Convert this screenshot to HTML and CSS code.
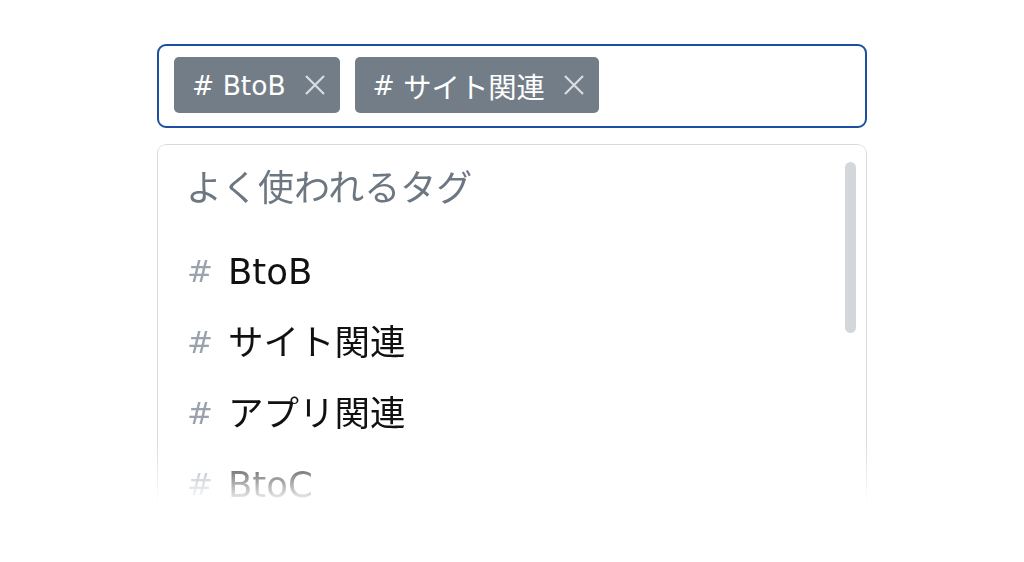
FILE: index.html
```html
<!DOCTYPE html>
<html lang="ja">
<head>
<meta charset="utf-8">
<link rel="stylesheet" href="styles.css">
</head>
<body>
<div class="wrap">
  <div class="input">
    <span class="tag"># BtoB<span class="x"><svg viewBox="0 0 20 20" width="20" height="20"><path d="M1 1 L19 19 M19 1 L1 19" stroke="#d9dde1" stroke-width="2.2" fill="none"/></svg></span></span>
    <span class="tag"># <span class="ja">サイト関連</span><span class="x"><svg viewBox="0 0 20 20" width="20" height="20"><path d="M1 1 L19 19 M19 1 L1 19" stroke="#d9dde1" stroke-width="2.2" fill="none"/></svg></span></span>
  </div>
  <div class="dropdown">
    <div class="title">よく使われるタグ</div>
    <ul class="list">
      <li><span class="hash">#</span>BtoB</li>
      <li><span class="hash">#</span>サイト関連</li>
      <li><span class="hash">#</span>アプリ関連</li>
      <li><span class="hash">#</span>BtoC</li>
    </ul>
    <div class="scrollbar"></div>
  </div>
</div>
</body>
</html>
```
FILE: styles.css
```css
html, body { margin: 0; padding: 0; background: #fff; }
body {
  font-family: "DejaVu Sans", "Noto Sans CJK JP", sans-serif;
  width: 1024px; height: 562px; overflow: hidden;
}
.wrap {
  width: 710px;
  margin: 44px 0 0 157px;
  display: flex; flex-direction: column; gap: 16px;
}
.input {
  box-sizing: border-box;
  height: 84px;
  border: 2px solid #1c4fa1;
  border-radius: 9px;
  padding: 11px 15px;
  display: flex; gap: 15px; align-items: flex-start;
}
.tag {
  height: 56px;
  box-sizing: border-box;
  background: #737d88;
  color: #fff;
  border-radius: 5px;
  padding: 0 15px 0 18px;
  display: flex; align-items: center;
  font-size: 26.5px;
  white-space: pre;
}
.tag .ja { font-size: 1.07em; }
.tag .x { display: flex; margin-left: 19px; }
.dropdown {
  position: relative;
  box-sizing: border-box;
  height: 375px;
  border: 1.5px solid #d6dade;
  border-bottom: none;
  border-radius: 9px 9px 0 0;
  padding: 21px 0 0 28px;
  overflow: hidden;
  -webkit-mask-image: linear-gradient(to bottom, #000 300px, transparent 360px);
  mask-image: linear-gradient(to bottom, #000 300px, transparent 360px);
}
.title {
  font-size: 36px;
  line-height: 46px;
  color: #6d7782;
}
.list {
  list-style: none; margin: 24px 0 0; padding: 0;
}
.list li {
  height: 71px; line-height: 71px;
  font-size: 35.5px; color: #111;
  display: flex; align-items: center;
}
.hash {
  color: #9aa3ad;
  width: 41px;
  padding-left: 1px;
  font-size: 31px;
}
.scrollbar {
  position: absolute;
  left: 687px; top: 17px;
  width: 11px; height: 171px;
  border-radius: 6px;
  background: #d3d7db;
}
```
